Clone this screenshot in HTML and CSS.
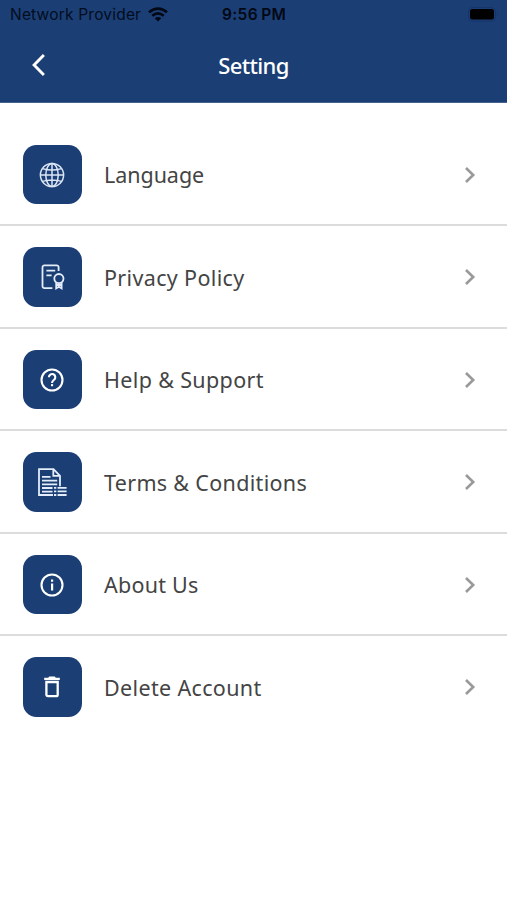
FILE: index.html
```html
<!DOCTYPE html>
<html lang="en">
<head>
<meta charset="utf-8">
<title>Setting</title>
<link rel="stylesheet" href="styles.css">
</head>
<body>
<header class="header">
  <div class="status">
    <span class="carrier">Network Provider</span>
    <svg class="wifi" width="20" height="15" viewBox="0 0 20 15"><g fill="none" stroke="#020814" stroke-width="2.7"><path d="M1 5.2Q10-2.1 19 5.2"/><path d="M4.2 8.7Q10 4 15.8 8.7"/></g><path d="M6.7 11.3Q10 8.6 13.3 11.3L10 14.5Z" fill="#020814"/></svg>
    <span class="clock">9:56 PM</span>
    <svg class="battery" width="32" height="16" viewBox="0 0 32 16"><rect x=".5" y=".5" width="27" height="13.6" rx="4" fill="none" stroke="#15356a"/><rect x="2" y="2" width="24" height="10.6" rx="2.5" fill="#000"/><path d="M29 5.3q1.6 2 0 4z" fill="#12305f"/></svg>
  </div>
  <div class="bar">
    <svg class="back" width="14" height="24" viewBox="0 0 14 24"><path d="M12.9 2 3.1 12l9.8 10" fill="none" stroke="#fff" stroke-width="2.9"/></svg>
    <h1 class="title">Setting</h1>
  </div>
</header>
<main class="list">
  <a class="row">
    <span class="tile"><svg width="32" height="32" viewBox="0 0 32 32"><g fill="none" stroke="#dce6f5" stroke-width="1.5"><circle cx="16" cy="16" r="11.6"/><ellipse cx="16" cy="16" rx="6.2" ry="11.6"/><path d="M16 4.4v23.2M4.4 16h23.2M6.5 9.6q9.5 3 19 0M6.5 22.4q9.5-3 19 0"/></g></svg></span>
    <span class="label language">Language</span>
    <svg class="chevron" width="12" height="18" viewBox="0 0 12 18"><path d="M2 2l7.2 7L2 16" /></svg>
  </a>
  <a class="row">
    <span class="tile"><svg width="32" height="32" viewBox="0 0 32 32"><g fill="none" stroke="#e4edf9" stroke-width="1.8"><path d="M16.4 27.2H8.4a1.9 1.9 0 0 1-1.9-1.9V6.3a1.9 1.9 0 0 1 1.9-1.9h12.3a1.9 1.9 0 0 1 1.9 1.9v3.6M10.4 9.6h8.8M10.4 14.4h5.2"/><circle cx="22.9" cy="17.6" r="4.6"/><path d="M20.2 21.5v5.8l2.7-1.6 2.7 1.6v-5.8M20.2 24h5.4"/></g></svg></span>
    <span class="label privacy">Privacy Policy</span>
    <svg class="chevron" width="12" height="18" viewBox="0 0 12 18"><path d="M2 2l7.2 7L2 16" /></svg>
  </a>
  <a class="row">
    <span class="tile"><svg width="32" height="32" viewBox="0 0 32 32"><g fill="none" stroke="#fff" stroke-width="2.1"><circle cx="16" cy="16" r="10.5"/><path d="M12.9 13.3a3.2 3.2 0 1 1 5.2 2.4c-1.3 1-2.1 1.6-2.1 3.2"/></g><path d="M15 20.1h2.1v2.1H15z" fill="#fff"/></svg></span>
    <span class="label help">Help &amp; Support</span>
    <svg class="chevron" width="12" height="18" viewBox="0 0 12 18"><path d="M2 2l7.2 7L2 16" /></svg>
  </a>
  <a class="row">
    <span class="tile"><svg width="32" height="32" viewBox="0 0 32 32"><g fill="none" stroke="#e4edf9" stroke-width="1.8"><path d="M17 29H3V3.1h14.5l6.5 6.8v10.3M17.3 3.1v6.8H24M6 10.8h8.5M6 14.6h15.2M6 18.3h15.2M6 22h10.5M6 25.6h10.5"/><path d="M18 21.8h2.3M21.6 21.8h9M18 25.4h2.3M21.6 25.4h9M18 29h2.3M21.6 29h9"/></g></svg></span>
    <span class="label terms">Terms &amp; Conditions</span>
    <svg class="chevron" width="12" height="18" viewBox="0 0 12 18"><path d="M2 2l7.2 7L2 16" /></svg>
  </a>
  <a class="row">
    <span class="tile"><svg width="32" height="32" viewBox="0 0 32 32"><circle cx="16" cy="16" r="10.5" fill="none" stroke="#fff" stroke-width="2.1"/><path d="M15 10.4h2.2v2.3H15zM15 14.6h2.2v6.9H15z" fill="#fff"/></svg></span>
    <span class="label about">About Us</span>
    <svg class="chevron" width="12" height="18" viewBox="0 0 12 18"><path d="M2 2l7.2 7L2 16" /></svg>
  </a>
  <a class="row">
    <span class="tile"><svg width="32" height="32" viewBox="0 0 32 32"><path d="M10.4 11v12.8a1.4 1.4 0 0 0 1.4 1.4h8.5a1.4 1.4 0 0 0 1.4-1.4V11z" fill="none" stroke="#fff" stroke-width="2.3"/><path d="M8.2 6.7h4l1-1.3h5.6l1 1.3h4v2.2H8.2z" fill="#fff"/></svg></span>
    <span class="label delete">Delete Account</span>
    <svg class="chevron" width="12" height="18" viewBox="0 0 12 18"><path d="M2 2l7.2 7L2 16" /></svg>
  </a>
</main>
</body>
</html>
```
FILE: styles.css
```css
* { box-sizing: border-box; }
body { margin: 0; height: 900px; background: #fff; font-family: "Noto Sans", sans-serif; overflow: hidden; }
svg { display: block; flex: none; }
.header { height: 103px; background: #1b3e75; border-bottom: 1px solid #46638f; }
.status { height: 29px; display: grid; grid-template-columns: 138px 74px 1fr 32px; align-items: center; padding: 0 7px 0 10px; font-family: Inter, sans-serif; font-size: 15.5px; color: #020d20; }
.carrier, .clock { white-space: nowrap; line-height: 20px; }
.carrier { letter-spacing: .2px; }
.clock { font-weight: 600; color: #020814; letter-spacing: .35px; word-spacing: -1px; }
.bar { height: 72px; display: grid; grid-template-columns: 1fr auto 1fr; align-items: center; }
.back { margin-left: 31px; }
.title { margin: 0; grid-column: 2; font-size: 22px; font-weight: 500; line-height: 30px; letter-spacing: -.65px; color: #fff; }
.list { padding-top: 20.5px; }
.row { height: 102.5px; display: flex; align-items: center; padding: 1.5px 31.5px 0 22.5px; border-bottom: 2px solid #dcdcdc; }
.row:last-child { border-bottom-color: transparent; }
.tile { width: 59.5px; height: 59.5px; flex: none; display: grid; place-items: center; border-radius: 13.5px; background: #1b3e75; }
.label { flex: 1; margin-left: 22px; padding-top: 1px; font-size: 21.5px; line-height: 30px; letter-spacing: .35px; color: #444; white-space: nowrap; }
.language { letter-spacing: -.05px; }
.about { letter-spacing: .25px; }
.terms { letter-spacing: .32px; }
.chevron { fill: none; stroke: #999; stroke-width: 2.6; }
```
